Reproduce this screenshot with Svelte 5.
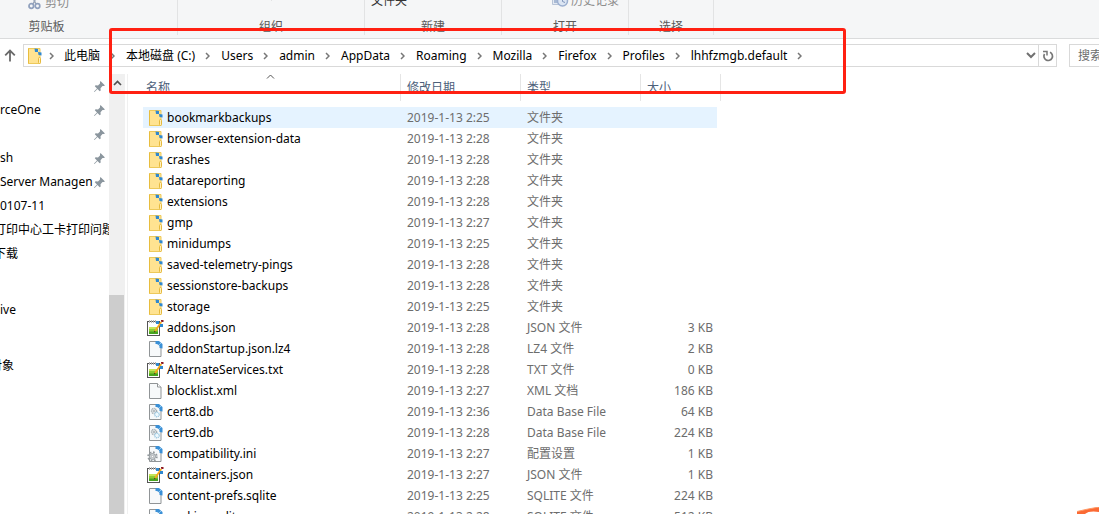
<script>
  const groups = [
    { label: '剪贴板', cls: 'clipboard' },
    { label: '组织', cls: 'organize' },
    { label: '新建', cls: 'create' },
    { label: '打开', cls: 'open' },
    { label: '选择', cls: 'select' }
  ];

  const crumbs = ['此电脑', '本地磁盘 (C:)', 'Users', 'admin', 'AppData', 'Roaming', 'Mozilla', 'Firefox', 'Profiles', 'lhhfzmgb.default'];

  const pinned = [
    { text: '', pin: true },
    { text: 'rceOne', pin: true },
    { text: '', pin: true },
    { text: 'sh', pin: true },
    { text: 'Server Managen', pin: true },
    { text: '0107-11' },
    { text: '打印中心工卡打印问题', cut: true },
    { text: '下载', cut: true }
  ];

  const places = [{ text: 'ive' }, { text: '' }, { text: '对象', cut: true, deep: true }];

  const dir = (name, time) => ({ icon: 'folder', name, time, type: '文件夹', size: '' });
  const file = (icon, name, time, type, size) => ({ icon, name, time, type, size: size + ' KB' });

  const rows = [
    dir('bookmarkbackups', '2:25'),
    dir('browser-extension-data', '2:28'),
    dir('crashes', '2:28'),
    dir('datareporting', '2:28'),
    dir('extensions', '2:28'),
    dir('gmp', '2:27'),
    dir('minidumps', '2:25'),
    dir('saved-telemetry-pings', '2:28'),
    dir('sessionstore-backups', '2:28'),
    dir('storage', '2:25'),
    file('notepad', 'addons.json', '2:28', 'JSON 文件', 3),
    file('page', 'addonStartup.json.lz4', '2:28', 'LZ4 文件', 2),
    file('notepad', 'AlternateServices.txt', '2:28', 'TXT 文件', 0),
    file('plain', 'blocklist.xml', '2:27', 'XML 文档', 186),
    file('db', 'cert8.db', '2:36', 'Data Base File', 64),
    file('db', 'cert9.db', '2:28', 'Data Base File', 224),
    file('ini', 'compatibility.ini', '2:27', '配置设置', 1),
    file('notepad', 'containers.json', '2:27', 'JSON 文件', 1),
    file('page', 'content-prefs.sqlite', '2:25', 'SQLITE 文件', 224),
    file('page', 'cookies.sqlite', '2:28', 'SQLITE 文件', 512)
  ];
</script>

{#snippet icon(kind)}
  <svg class="icon" viewBox="0 0 17 16" width="17" height="16" aria-hidden="true">
    {#if kind === 'folder'}
      <path d="M2.500 .5h11.500v15h-11.500z" fill="#ffe391" stroke="#edc95a" />
      <path d="M2.500 15.500V.5" stroke="#e8bd3e" />
      <rect x="12.500" y="9.500" width="2" height="6" rx="1" fill="#fff0bd" stroke="#e6b93c" />
      <path d="M8.500 .5l3.500 .5v3h-3zM12 4l3.500 .5v3l-3-.5z" fill="#2f88d0" />
    {:else if kind === 'notepad'}
      <rect x=".5" y="1.500" width="12" height="14" fill="#fff" stroke="#555" />
      <path d="M2 7h9v7H2z" fill="#c3e45a" />
      <path d="M2 9h9v5H2z" fill="#8ccb35" />
      <path d="M2 11.500h9V14H2z" fill="#47a51f" />
      <path d="M2.500 0v3M4.500 0v3M6.500 0v3M8.500 0v3" stroke="#b5b5b5" />
      <path d="M7 12.500l1-3 5.500-8 1.500 1-5.500 8z" fill="#f7a81b" />
      <path d="M7 12.500l.5-1.700 1.200 .8z" fill="#222" />
      <path d="M14 1.500V0h2.500v2H15z" fill="#8b1720" />
      <path d="M9 1h3v3H9zM13 4h3v3h-3z" fill="#2f88d0" />
    {:else}
      <path d="M2.500 .5h8l3.500 3.500v11.500H2.500z" fill="#f7f9fa" stroke="#909496" />
      {#if kind === 'plain'}
        <path d="M10.500 .5V4H14" fill="#fff" stroke="#909496" />
      {:else}
        <path d="M8.500 0H12l3.500 3v4.500L12.500 7C13 4 11 3 8.500 3z" fill="#3b90d6" />
        <path d="M12 4l2-2" stroke="#8ec6ee" />
      {/if}
      {#if kind === 'db'}
        <circle cx="7" cy="7" r="2.500" fill="#e4e8ea" stroke="#a3abb0" stroke-dasharray="1 .6" stroke-width="1.500" />
        <circle cx="10" cy="10.500" r="2.300" fill="#eef8fd" stroke="#9cc8e0" stroke-dasharray="1 .6" stroke-width="1.400" />
        <circle cx="7" cy="7" r=".8" fill="#7b878e" />
      {:else if kind === 'ini'}
        <circle cx="5.500" cy="10.500" r="4.300" fill="none" stroke="#949a9e" stroke-dasharray="1.700 1.680" stroke-width="1.800" />
        <circle cx="5.500" cy="10.500" r="3" fill="#d4d8da" stroke="#949a9e" />
        <circle cx="5.500" cy="10.500" r="1.200" fill="#fff" stroke="#949a9e" stroke-width=".7" />
      {/if}
    {/if}
  </svg>
{/snippet}

{#snippet chevron()}
  <svg class="chev" viewBox="0 0 5 8" width="5" height="8" aria-hidden="true">
    <path d="M1 1l3 3-3 3" fill="none" stroke="#777" stroke-width="1.500" />
  </svg>
{/snippet}

<div class="explorer">
  <header class="ribbon">
    {#each groups as g}
      <section class="group {g.cls}">
        <div class="tools">
          {#if g.cls === 'clipboard'}
            <button class="muted" disabled>
              <svg viewBox="0 0 13 14" width="13" height="14" aria-hidden="true">
                <path d="M4 0l4 8M9 0L5 8" stroke="#9ba7b9" stroke-width="1.500" />
                <g fill="none" stroke="#8fa0bd" stroke-width="1.700">
                  <circle cx="3.300" cy="10" r="2.300" />
                  <circle cx="9.500" cy="10" r="2.300" />
                </g>
              </svg>
              剪切
            </button>
          {:else if g.cls === 'organize'}
            <i class="tick"></i>
          {:else if g.cls === 'create'}
            <button>文件夹</button>
          {:else if g.cls === 'open'}
            <button class="muted" disabled>
              <svg viewBox="0 0 17 14" width="17" height="14" aria-hidden="true">
                <path d="M.5 0v10.500h7" fill="#e3e9f2" stroke="#b7c3d6" />
                <path d="M2 5h4v4H2z" fill="#a9bad4" />
                <circle cx="10.500" cy="7" r="5" fill="#dbe5f3" stroke="#9bafd0" stroke-width="1.500" />
                <path d="M10.500 3.500V7.500l2.500 1" fill="none" stroke="#8095ba" />
              </svg>
              历史记录
            </button>
          {/if}
        </div>
        <span class="caption">{g.label}</span>
      </section>
    {/each}
  </header>

  <nav class="address">
    <button class="up" aria-label="上移">
      <svg viewBox="0 0 12 13" width="12" height="13"><path d="M6 12.500V1.500M1.200 6.300L6 1.500l4.800 4.800" fill="none" stroke="#6a6a6a" stroke-width="1.800" /></svg>
    </button>
    <div class="path">
      {@render icon('folder')}
      {@render chevron()}
      {#each crumbs as c}
        <button class="crumb">{c}</button>
        {@render chevron()}
      {/each}
      <button class="drop" aria-label="历史位置">
        <svg viewBox="0 0 10 7" width="10" height="7"><path d="M1 1l4 4 4-4" fill="none" stroke="#707070" stroke-width="2" /></svg>
      </button>
      <button class="refresh" aria-label="刷新">
        <svg viewBox="0 0 12 12" width="12" height="12">
          <path d="M8 2.300A4.300 4.300 0 1 1 2.500 4" fill="none" stroke="#777" stroke-width="1.700" />
          <path d="M1 1.500H5V5.500" fill="none" stroke="#777" stroke-width="1.500" />
        </svg>
      </button>
    </div>
    <input class="search" type="search" placeholder="搜索" aria-label="搜索" />
  </nav>

  <main>
    <aside>
      {#each [pinned, places] as list, n}
        <ul class:places={n === 1}>
          {#each list as item}
            <li>
              <span class:cut={item.cut} class:deep={item.deep}>{item.text}</span>
              {#if item.pin}
                <svg viewBox="0 0 11 11" width="11" height="11" aria-hidden="true">
                  <path d="M6.500 0L11 4.500 9.700 5 8.500 5l-2 2.200.2 2.300-1 .8L3.500 8 .5 11 0 10.500l3-3L.8 5.300l.8-1 2.400.2L6 2.500V1z" fill="#8b969e" />
                </svg>
              {/if}
            </li>
          {/each}
        </ul>
      {/each}
    </aside>
    <div class="scroll">
      <svg viewBox="0 0 9 6" width="9" height="6" aria-hidden="true"><path d="M1 5l3.500-3.500L8 5" fill="none" stroke="#505050" stroke-width="1.700" /></svg>
      <div class="thumb"></div>
    </div>
    <div class="files">
      <table>
        <thead>
          <tr>
            <th class="name">
              名称
              <svg class="sort" viewBox="0 0 9 5" width="9" height="5" aria-hidden="true"><path d="M1 4.500L4.500 1 8 4.500" fill="none" stroke="#555" /></svg>
            </th>
            <th class="date">修改日期</th>
            <th class="type">类型</th>
            <th class="size">大小</th>
          </tr>
        </thead>
        <tbody>
          {#each rows as r, i}
            <tr class:active={i === 0}>
              <td class="name"><div>{@render icon(r.icon)}{r.name}</div></td>
              <td>2019-1-13 {r.time}</td>
              <td>{r.type}</td>
              <td class="size">{r.size}</td>
            </tr>
          {/each}
        </tbody>
      </table>
    </div>
  </main>

  <div class="marker"></div>
  <svg class="badge" viewBox="0 0 22 7" width="22" height="7" aria-hidden="true">
    <path d="M0 7V4.500Q10 2 22 0V5Q12 3.500 8 7z" fill="#fb6a34" />
    <path d="M0 4.500Q10 2 22 0" fill="none" stroke="#ff9a66" />
  </svg>
</div>

<style>
  :global(body) {
    background: #fff;
  }
  .explorer {
    position: relative;
    display: flex;
    flex-direction: column;
    height: 100vh;
    overflow: hidden;
    font: 12px/20px 'Noto Sans', 'Noto Sans CJK SC', sans-serif;
    color: #000;
  }
  .explorer * {
    box-sizing: border-box;
  }
  button {
    display: flex;
    align-items: center;
    padding: 0;
    border: 0;
    background: none;
    font: inherit;
    color: inherit;
    white-space: nowrap;
  }
  svg {
    flex: none;
    display: block;
  }
  .ribbon {
    flex: none;
    display: flex;
    height: 39px;
    background: #f5f6f7;
    border-bottom: 1px solid #dadbdc;
  }
  .group {
    flex: none;
    display: flex;
    flex-direction: column;
    justify-content: flex-end;
    height: 35px;
    border-right: 1px solid #e2e3e4;
  }
  .clipboard {
    width: 262px;
    margin-left: -84px;
  }
  .organize {
    width: 187px;
  }
  .create {
    width: 137px;
  }
  .open {
    width: 127px;
  }
  .select {
    width: 85px;
  }
  .tools {
    display: flex;
    height: 20px;
    margin-bottom: 6px;
  }
  .tools button {
    height: 20px;
    gap: 4px;
    color: #333;
  }
  .tools .muted {
    color: #8d8d8d;
  }
  .clipboard .tools {
    padding-left: 112px;
  }
  .create .tools {
    padding-left: 6px;
    margin-bottom: 8px;
  }
  .open .tools {
    padding-left: 50px;
    margin-bottom: 8px;
  }
  .open button {
    gap: 2px;
  }
  .organize .tools {
    margin-bottom: 18px;
  }
  .tick {
    width: 1px;
    height: 20px;
    margin: 0 auto;
    background: #e2e3e4;
  }
  .caption {
    line-height: 16px;
    text-align: center;
    color: #5a5a5a;
  }
  .address {
    flex: none;
    display: flex;
    align-items: center;
    height: 35px;
    padding: 0 0 2px 4px;
  }
  .up {
    width: 19px;
  }
  .path {
    flex: 1;
    display: flex;
    align-items: center;
    height: 23px;
    padding-left: 2px;
    border: 1px solid #d9d9d9;
  }
  .path > .chev {
    margin: 0 11px 0 10px;
  }
  .path > .icon + .chev {
    margin-left: 6px;
    margin-right: 10px;
  }
  .drop {
    margin-left: auto;
    padding: 0 2px;
  }
  .refresh {
    justify-content: center;
    width: 18px;
    height: 21px;
    border-left: 1px solid #d9d9d9;
  }
  .search {
    flex: none;
    width: 200px;
    height: 23px;
    margin: 0 -170px 0 12px;
    padding: 0 0 0 8px;
    border: 1px solid #d9d9d9;
    font: inherit;
  }
  .search::placeholder {
    color: #6d6d6d;
  }
  main {
    flex: 1;
    display: flex;
    min-height: 0;
  }
  aside {
    flex: none;
    width: 109px;
    overflow: hidden;
  }
  ul {
    margin: 0;
    padding: 0;
    list-style: none;
  }
  li {
    display: flex;
    align-items: center;
    justify-content: space-between;
    height: 24px;
    padding-right: 4px;
    white-space: nowrap;
  }
  li span {
    min-width: 0;
  }
  .cut {
    margin-left: -6px;
  }
  .deep {
    margin-left: -10px;
  }
  .places {
    margin-top: 30px;
  }
  .places li {
    height: 28px;
  }
  .scroll {
    flex: none;
    display: flex;
    flex-direction: column;
    align-items: center;
    width: 16px;
    padding-top: 6px;
    background: #f0f0f0;
  }
  .thumb {
    flex: 1;
    width: 100%;
    margin-top: 209px;
    background: #cdcdcd;
    border-right: 1px solid #f0f0f0;
  }
  .files {
    flex: 1;
    margin-left: 2px;
    padding-left: 15px;
    border-left: 1px solid #f0f0f0;
    overflow: hidden;
  }
  table {
    width: 578px;
    table-layout: fixed;
    border-collapse: separate;
    border-spacing: 0;
  }
  th {
    position: relative;
    height: 27px;
    padding: 0 0 0 6px;
    border-right: 1px solid #e5e5e5;
    font-weight: 400;
    text-align: left;
    color: #4c607a;
  }
  th.name {
    width: 258px;
    padding-left: 3px;
  }
  .date,
  .type {
    width: 120px;
  }
  .sort {
    position: absolute;
    top: 0;
    left: 123px;
  }
  thead::after {
    content: '';
    display: block;
    height: 6px;
  }
  td {
    height: 21px;
    padding: 0 0 0 6px;
    color: #6d6d6d;
    white-space: nowrap;
  }
  td.name {
    padding-left: 4px;
    color: #000;
  }
  td.name div {
    display: flex;
    align-items: center;
    gap: 3px;
  }
  td.size {
    padding-right: 4px;
    border-right: 4px solid transparent;
    background-clip: padding-box;
    text-align: right;
  }
  .active td {
    background-color: #e5f3ff;
  }
  .marker {
    position: absolute;
    top: 28px;
    left: 109px;
    width: 737px;
    height: 66px;
    border: 3px solid #ff2012;
    border-radius: 3px;
    pointer-events: none;
  }
  .badge {
    position: absolute;
    right: 0;
    bottom: 0;
  }
</style>
